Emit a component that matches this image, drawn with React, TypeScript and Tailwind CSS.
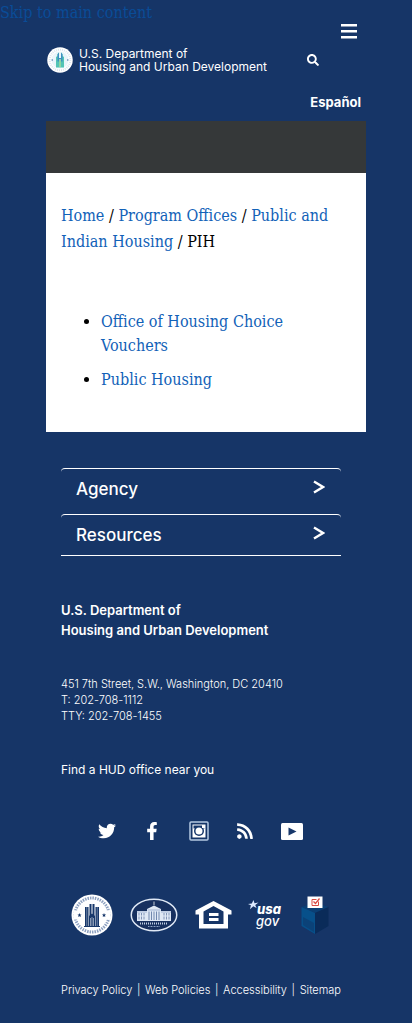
import React from "react";
import { FaTwitter, FaFacebookF, FaRss, FaSearch } from "react-icons/fa";

const linkClass = "text-[#1262b8] hover:underline";

function HeaderSeal() {
  return (
    <svg viewBox="0 0 52 52" className="size-[26px] shrink-0" aria-hidden="true">
      <circle cx="26" cy="26" r="25.5" fill="#fff" />
      <circle cx="26" cy="26" r="20.5" fill="none" stroke="#dbe6ef" strokeWidth="4" strokeDasharray="2 2" />
      <circle cx="26" cy="26" r="17" fill="#e9f5fa" />
      <path d="M18 20l3-2v-4l3-3v11h4V11l3 3v4l3 2v21H18z" fill="#52c4b4" />
      <path d="M21 15l3-4v11h4V11l3 4v14H21z" fill="#3d8fc2" />
      <path d="M24 24h4v16h-4z" fill="#8fd3a4" />
      <circle cx="10.500" cy="26" r="1.600" fill="#4e7cae" />
      <circle cx="41.500" cy="26" r="1.600" fill="#4e7cae" />
    </svg>
  );
}

function HudSeal() {
  return (
    <svg viewBox="0 0 84 84" className="size-[42px]" aria-hidden="true">
      <circle cx="42" cy="42" r="41" fill="#fff" />
      <circle cx="42" cy="42" r="34" fill="none" stroke="#8ca0c0" strokeWidth="6" strokeDasharray="3 2" />
      <path d="M5 33h12v18H5zM67 33h12v18H67z" fill="#fff" />
      <circle cx="42" cy="42" r="28" fill="#fff" />
      <path d="M28 26h7v38h-7zM37 20h4v44h-4zM43 20h4v44h-4zM49 26h7v38h-7z" fill="#17376a" />
      <path d="M31.500 26v38M52.500 26v38" stroke="#b8c6da" strokeWidth="1" />
      <path d="M36 44l6-5 6 5v20H36z" fill="#17376a" />
      <path d="M39 48v16M42 46v18M45 48v16" stroke="#fff" strokeWidth="1" />
      <path d="M26 65h32" stroke="#17376a" strokeWidth="2" />
      <path d="M17 38l1.200 2.800 3 .2-2.300 2 .8 3-2.700-1.600-2.600 1.600.8-3-2.300-2 3-.2zM66 38l1.200 2.800 3 .2-2.300 2 .8 3-2.700-1.600-2.600 1.600.8-3-2.300-2 3-.2z" fill="#17376a" />
    </svg>
  );
}

function WhiteHouse() {
  return (
    <svg viewBox="0 0 96 68" className="h-[34px] w-12" aria-hidden="true">
      <ellipse cx="48" cy="34" rx="45.500" ry="31.500" fill="#17305f" stroke="#dfe8f5" strokeWidth="3" />
      <path d="M48 7v7" stroke="#fff" strokeWidth="1.500" />
      <path d="M34 22l14-7 14 7v4h20v20H14V26h20z" fill="#dfe8f5" />
      <path d="M14 28h20M62 28h20M35 24h26" stroke="#8fa4c7" strokeWidth="1.500" />
      <path d="M18 30v13M23 30v13M28 30v13M68 30v13M73 30v13M78 30v13" stroke="#8094b8" strokeWidth="2" />
      <path d="M38 27v17M43 27v17M48 27v17M53 27v17M58 27v17" stroke="#7389b0" strokeWidth="2" />
      <path d="M14 36h20M62 36h20" stroke="#dfe8f5" strokeWidth="2" />
      <path d="M20 51h56" stroke="#bfcde2" strokeWidth="4" strokeDasharray="2 2" />
      <path d="M36 57h24" stroke="#8fa4c7" strokeWidth="2" strokeDasharray="2 1" />
    </svg>
  );
}

function EqualHousing() {
  return (
    <svg viewBox="0 0 74 56" className="h-7 w-[37px]" aria-hidden="true">
      <path fillRule="evenodd" fill="#fff" d="M37 0L1 19v8h7v28h58V27h7v-8zM37 10l20 11v25H17V21z" />
      <path fill="#fff" d="M28 24h19v6H28zM28 34h19v6H28z" />
    </svg>
  );
}

function UsaGov() {
  return (
    <svg viewBox="0 0 36 32" className="h-8 w-9" aria-hidden="true">
      <path d="M5.500 1l1 3.200 4-.7-3.300 2.400L8.600 9 5.300 7.300 2 10.300l.9-4L0 5l3.800-.6z" fill="#dceaff" />
      <text x="9" y="15" fill="#fff" className="font-['Inter'] text-[13px] font-extrabold italic">usa</text>
      <text x="8" y="27" fill="#fff" className="font-['Inter'] text-[13px] font-medium italic">gov</text>
    </svg>
  );
}

function BallotBox() {
  return (
    <svg viewBox="0 0 56 78" className="h-[39px] w-7" aria-hidden="true">
      <path d="M1 22l27-9 27 9-27 12z" fill="#0b3f74" />
      <path d="M1 22l27 12v42L1 60z" fill="#07508a" />
      <path d="M55 22L28 34v42l27-16z" fill="#0a2b59" />
      <path d="M4 42l22 12v18L4 58z" fill="#0b4278" />
      <path d="M13 1h30v23H13z" fill="#fff" />
      <path d="M35 11v8H22V7h9" fill="none" stroke="#d94b43" strokeWidth="2" />
      <path d="M25 11l4 4 8-10" fill="none" stroke="#d94b43" strokeWidth="2.500" />
    </svg>
  );
}

function InstagramIcon() {
  return (
    <svg viewBox="0 0 20 20" className="size-5" aria-hidden="true">
      <rect x="1" y="1" width="18" height="18" rx="1" fill="none" stroke="#b5c9e2" strokeWidth="1.500" />
      <path d="M3.500 3.500h13v13h-13z" fill="#fff" />
      <circle cx="10" cy="10" r="5" fill="#17376a" />
      <path d="M4.500 4.500h11v3h-11z" fill="#17376a" />
      <path d="M13 4h3v3h-3z" fill="#fff" />
      <circle cx="10" cy="10" r="3.500" fill="#fff" />
    </svg>
  );
}

function YoutubeIcon() {
  return (
    <svg viewBox="0 0 22 17" className="h-[17px] w-[22px]" aria-hidden="true">
      <rect width="22" height="17" rx="1.500" fill="#fff" />
      <path d="M7.500 4.500l8 4-8 4z" fill="#17376a" />
    </svg>
  );
}

function FooterSection({ label }: { label: string }) {
  return (
    <button type="button" className="flex h-[46px] w-full items-start justify-between rounded-[4px] border-t border-white px-[15px] pt-2 text-left text-[17px] leading-6 font-medium">
      <span>{label}</span>
      <svg viewBox="0 0 12 14" className="mt-[3px] mr-px h-[14px] w-3" aria-hidden="true">
        <path d="M1 1.500L10 7l-9 5.500" fill="none" stroke="#fff" strokeWidth="2.400" />
      </svg>
    </button>
  );
}

export default function App() {
  return (
    <div className="min-h-screen bg-[#163567] font-['Inter',sans-serif] text-white">
      <a href="#main" className="block h-6 font-['DejaVu_Serif_Condensed','DejaVu_Serif',serif] text-base leading-[26px] text-[#0a4c97]">
        Skip to main content
      </a>

      <div className="px-[46px]">
        <header>
          <div className="flex h-[23px] justify-end pr-[9px]">
            <button type="button" aria-label="Menu" className="h-[15px]">
              <svg viewBox="0 0 16 15" className="h-[15px] w-4" aria-hidden="true">
                <path d="M0 1.200h16M0 7.200h16M0 13.200h16" stroke="#fff" strokeWidth="2.400" />
              </svg>
            </button>
          </div>
          <div className="flex items-center justify-between pr-[47px] pl-px">
            <a href="#home" className="flex items-center gap-1.5">
              <HeaderSeal />
              <span className="text-[12px] leading-[13px] whitespace-nowrap">
                U.S. Department of
                <br />
                Housing and Urban Development
              </span>
            </a>
            <button type="button" aria-label="Search">
              <FaSearch className="size-3" />
            </button>
          </div>
          <div className="flex h-12 items-end justify-end pr-[5px] pb-[9px]">
            <a href="#espanol" className="text-[13px] leading-5 font-bold">Español</a>
          </div>
          <div className="h-[52px] bg-[#353839]" />
        </header>

        <main id="main" className="bg-white px-[15px] pt-[30px] pb-10 font-['DejaVu_Serif_Condensed','DejaVu_Serif',serif] text-base text-black">
          <nav aria-label="Breadcrumb" className="leading-[26px]">
            <a href="#home" className={linkClass}>Home</a> <span>/</span>{" "}
            <a href="#offices" className={linkClass}>Program Offices</a> <span>/</span>{" "}
            <a href="#pih" className={linkClass}>
              <span>Public and</span> <span>Indian Housing</span>
            </a>{" "}
            <span>/</span> <span>PIH</span>
          </nav>
          <ul className="mt-[55px] list-disc space-y-2.5 pl-10 leading-6">
            <li><a href="#vouchers" className={linkClass}>Office of Housing Choice Vouchers</a></li>
            <li><a href="#public" className={linkClass}>Public Housing</a></li>
          </ul>
        </main>

        <footer className="pt-9 pr-[25px] pb-6 pl-[15px]">
          <FooterSection label="Agency" />
          <FooterSection label="Resources" />
          <div className="-mt-[5px] border-t border-white" />

          <p className="mt-11 text-[13px] leading-5 font-semibold">
            U.S. Department of
            <br />
            Housing and Urban Development
          </p>
          <address className="mt-9 text-[11px] leading-4 font-light whitespace-nowrap not-italic">
            451 7th Street, S.W., Washington, DC 20410
            <br />
            T: 202-708-1112
            <br />
            TTY: 202-708-1455
          </address>
          <a href="#local" className="mt-9 block text-[12px] leading-5">Find a HUD office near you</a>

          <div className="mt-[41px] flex h-5 items-center justify-between pr-[38px] pl-[37px]">
            <a href="#twitter" aria-label="Twitter"><FaTwitter className="size-[18px]" /></a>
            <a href="#facebook" aria-label="Facebook"><FaFacebookF className="size-[18px]" /></a>
            <a href="#instagram" aria-label="Instagram"><InstagramIcon /></a>
            <a href="#rss" aria-label="RSS"><FaRss className="size-[18px]" /></a>
            <a href="#youtube" aria-label="YouTube"><YoutubeIcon /></a>
          </div>

          <div className="mt-[53px] flex h-[42px] items-center justify-between pr-3 pl-2.5">
            <a href="#hud" aria-label="HUD"><HudSeal /></a>
            <a href="#whitehouse" aria-label="The White House"><WhiteHouse /></a>
            <a href="#equal" aria-label="Equal Housing"><EqualHousing /></a>
            <a href="#usagov" aria-label="USA.gov"><UsaGov /></a>
            <a href="#vote" aria-label="Vote"><BallotBox /></a>
          </div>

          <nav aria-label="Legal" className="mt-[46px] flex justify-between text-[11px] leading-4 font-light whitespace-nowrap">
            <a href="#privacy">Privacy Policy</a>
            <span>|</span>
            <a href="#policies">Web Policies</a>
            <span>|</span>
            <a href="#accessibility">Accessibility</a>
            <span>|</span>
            <a href="#sitemap">Sitemap</a>
          </nav>
        </footer>
      </div>
    </div>
  );
}
